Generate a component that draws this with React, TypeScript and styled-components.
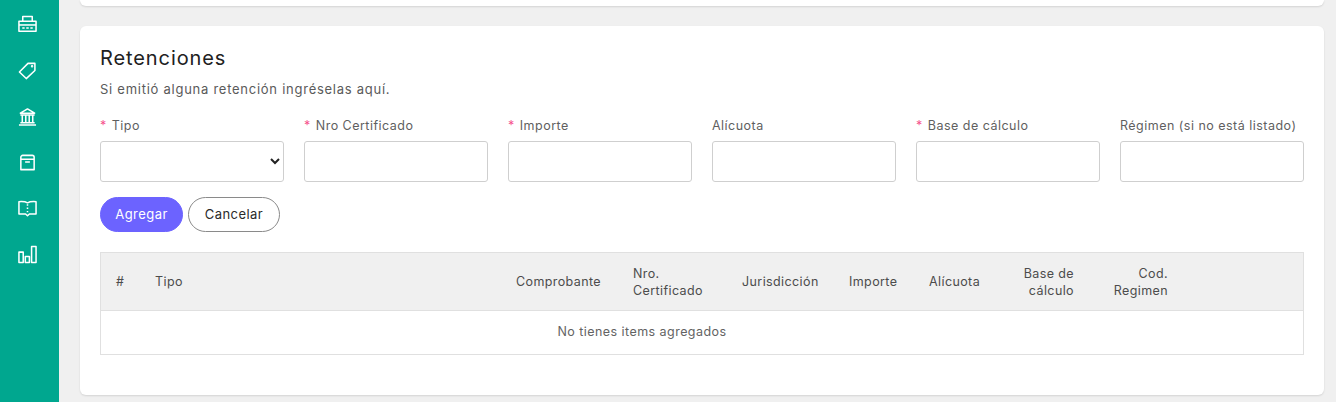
import React from "react";
import styled, { createGlobalStyle } from "styled-components";

const Global = createGlobalStyle`
  html, body { margin: 0; padding: 0; height: 402px; overflow: hidden; background: #f0f0f0; }
  body { font-family: "Inter", "Noto Sans", sans-serif; }
  * { box-sizing: border-box; }
`;

const Page = styled.div`
  display: flex;
  width: 1336px;
  height: 402px;
  overflow: hidden;
  background: #f0f0f0;
`;

const Sidebar = styled.nav`
  width: 59px;
  flex: none;
  background: #00a78f;
  display: flex;
  flex-direction: column;
  padding: 1px 0 0 18px;
`;

const NavItem = styled.a`
  height: 46px;
  display: flex;
  align-items: center;
  color: #fff;
  & svg { width: 19px; height: 19px; display: block; }
`;

const Main = styled.main`
  flex: 1;
  min-width: 0;
  padding: 0 12px 0 21px;
  display: flex;
  flex-direction: column;
  gap: 20px;
`;

const TopCard = styled.div`
  height: 6px;
  background: #fff;
  border-radius: 0 0 6px 6px;
  box-shadow: 0 1px 2px rgba(0, 0, 0, 0.12);
`;

const Card = styled.section`
  height: 369px;
  background: #fff;
  border-radius: 6px;
  box-shadow: 0 1px 2px rgba(0, 0, 0, 0.12);
  padding: 20px;
  display: flex;
  flex-direction: column;
`;

const Title = styled.h2`
  margin: 0;
  font-size: 20px;
  line-height: 24px;
  font-weight: 400;
  color: #212121;
  letter-spacing: 0.9px;
`;

const Subtitle = styled.p`
  margin: 9px 0 0;
  font-size: 13px;
  line-height: 20px;
  color: #5a5a5a;
  letter-spacing: 0.74px;
`;

const FormRow = styled.div`
  display: grid;
  grid-template-columns: repeat(6, 184px);
  column-gap: 20px;
  margin-top: 18px;
`;

const Field = styled.label`
  display: flex;
  flex-direction: column;
  gap: 6px;
`;

const LabelText = styled.span`
  font-size: 12.5px;
  line-height: 18px;
  color: #5f5f5f;
  letter-spacing: 0.48px;
  white-space: nowrap;
`;

const Star = styled.span`
  color: #f5528c;
  margin-right: 5px;
`;

const Input = styled.input`
  width: 184px;
  height: 41px;
  border: 1px solid #cfcfcf;
  border-radius: 3px;
  background: #fff;
  outline: none;
`;

const Select = styled.select`
  width: 184px;
  height: 41px;
  border: 1px solid #cfcfcf;
  border-radius: 3px;
  background: #fff;
  outline: none;
  color: #222;
`;

const Buttons = styled.div`
  display: flex;
  gap: 5px;
  margin-top: 15px;
`;

const Button = styled.button<{ $primary?: boolean }>`
  height: 35px;
  width: ${(p) => (p.$primary ? "83px" : "92px")};
  border-radius: 18px;
  border: 1px solid ${(p) => (p.$primary ? "#6c63ff" : "#8a8a8a")};
  background: ${(p) => (p.$primary ? "#6c63ff" : "#fff")};
  color: ${(p) => (p.$primary ? "#fff" : "#2b2b2b")};
  font-family: inherit;
  font-size: 13px;
  letter-spacing: 0.45px;
  padding: 0 0 2px;
`;

const Table = styled.div`
  margin-top: 20px;
  border: 1px solid #e0e0e0;
  height: 103px;
  display: flex;
  flex-direction: column;
`;

const HeaderRow = styled.div`
  height: 58px;
  flex: none;
  display: grid;
  grid-template-columns: 39px 361px 117px 109px 107px 80px 82px 93px 94px 1fr;
  align-items: center;
  background: #f0f0f0;
  border-bottom: 1px solid #e0e0e0;
`;

const Th = styled.div<{ $right?: boolean }>`
  padding: 0 15px;
  font-size: 12.5px;
  line-height: 17px;
  color: #4c4c4c;
  letter-spacing: 0.4px;
  white-space: nowrap;
  text-align: ${(p) => (p.$right ? "right" : "left")};
`;

const Empty = styled.div`
  flex: 1;
  display: flex;
  align-items: center;
  justify-content: center;
  padding: 0 120px 2px 0;
  font-size: 12.5px;
  color: #636363;
  letter-spacing: 0.45px;
`;

const Svg: React.FC<{ children: React.ReactNode }> = ({ children }) => (
  <svg viewBox="0 0 20 20" fill="none" stroke="currentColor" strokeWidth="1.6" strokeLinejoin="round">
    {children}
  </svg>
);

const icons = [
  <Svg key="print">
    <path d="M5 7V1.500h10V7" />
    <path d="M1 6.500h18V17H1z" />
    <path d="M1 10.500h18" />
    <path d="M4.500 13.800h2.500M8.700 13.800h2.600M13 13.800h2.500" />
  </Svg>,
  <Svg key="tag">
    <path d="M10.500 2.500h7.300v7.500L8.700 18.500 1.500 11.500z" />
    <circle cx="14.800" cy="5.500" r="0.5" />
  </Svg>,
  <Svg key="bank">
    <path d="M2.500 6.500 10 2l7.500 4.500z" />
    <path d="M2.500 8.500h15M4.500 9v7M8.200 9v7M11.800 9v7M15.500 9v7M2.500 16.500h15M1 18.900h18" />
  </Svg>,
  <Svg key="box">
    <path d="M3 6.500v-2a2 2 0 0 1 2-2h10a2 2 0 0 1 2 2v13H3z" />
    <path d="M3 6.500h14M7.500 9.500h5" />
  </Svg>,
  <Svg key="book">
    <path d="M10 4C8 2.800 4 2.600 1 2.800v13h7l2 1.800 2-1.800h7v-13c-3-.2-7 0-9 1.200z" />
    <path d="M10 5.500v1.500M10 9v1.500M10 12.500v1.500" />
  </Svg>,
  <Svg key="chart">
    <path d="M1 7.500h4.500v11H1zM7.700 12h4.300v6.500H7.700zM14.300 1.500h4.700v17h-4.700z" />
  </Svg>,
];

const fields = [
  { label: "Tipo", required: true, select: true },
  { label: "Nro Certificado", required: true },
  { label: "Importe", required: true },
  { label: "Alícuota" },
  { label: "Base de cálculo", required: true },
  { label: "Régimen (si no está listado)" },
];

const columns: { lines: string[]; right?: boolean }[] = [
  { lines: ["#"] },
  { lines: ["Tipo"] },
  { lines: ["Comprobante"] },
  { lines: ["Nro.", "Certificado"] },
  { lines: ["Jurisdicción"] },
  { lines: ["Importe"] },
  { lines: ["Alícuota"] },
  { lines: ["Base de", "cálculo"], right: true },
  { lines: ["Cod.", "Regimen"], right: true },
  { lines: [] },
];

export default function App() {
  return (
    <Page>
      <Global />
      <Sidebar>
        {icons.map((icon, i) => (
          <NavItem key={i}>{icon}</NavItem>
        ))}
      </Sidebar>
      <Main>
        <TopCard />
        <Card>
          <Title>Retenciones</Title>
          <Subtitle>Si emitió alguna retención ingréselas aquí.</Subtitle>
          <FormRow>
            {fields.map((f) => (
              <Field key={f.label}>
                <LabelText>
                  {f.required && <Star>*</Star>}
                  {f.label}
                </LabelText>
                {f.select ? <Select /> : <Input />}
              </Field>
            ))}
          </FormRow>
          <Buttons>
            <Button $primary>Agregar</Button>
            <Button>Cancelar</Button>
          </Buttons>
          <Table>
            <HeaderRow>
              {columns.map((c, i) => (
                <Th key={i} $right={c.right}>
                  {c.lines.map((l) => (
                    <div key={l}>{l}</div>
                  ))}
                </Th>
              ))}
            </HeaderRow>
            <Empty>No tienes items agregados</Empty>
          </Table>
        </Card>
      </Main>
    </Page>
  );
}
